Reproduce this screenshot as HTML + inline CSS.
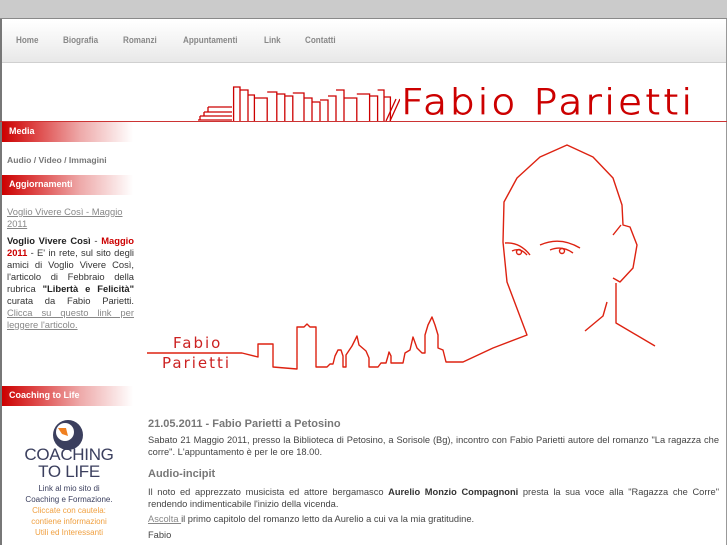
<!DOCTYPE html>
<html><head><meta charset="utf-8"><style>
*{margin:0;padding:0;box-sizing:border-box}
body{width:727px;height:545px;overflow:hidden;background:#fff;font-family:"Liberation Sans",sans-serif;position:relative}
.top{position:absolute;left:0;top:0;width:727px;height:19px;background:#cbcbcb;border-bottom:1px solid #8a8a8a}
.frame{position:absolute;left:0;top:19px;width:727px;height:526px;border-left:2px solid #777;border-right:1px solid #999}
.nav{position:absolute;left:2px;top:20px;width:724px;height:43px;background:linear-gradient(#fff 0,#fbfbfb 8px,#f2f2f2 25px,#e8e8e8 42px);border-bottom:1px solid #d0d0d0}
.nav span{position:absolute;top:15px;font-size:9px;font-weight:bold;color:#888;transform:scaleX(.9);transform-origin:left}
.redline{position:absolute;left:0;top:121px;width:727px;height:1px;background:#c33}
.logo{position:absolute;left:401px;top:83px;font-size:35px;color:#c00;letter-spacing:2.4px;font-family:"DejaVu Sans",sans-serif;font-weight:200;transform:scaleX(1.13);transform-origin:left;white-space:nowrap;-webkit-text-stroke:0.9px #c00}
.bar{position:absolute;left:2px;width:131px;height:20px;background:linear-gradient(90deg,#c00 0,#d44 25%,#eaa 60%,#fff 100%);color:#fff;font-size:9px;font-weight:bold;padding:4px 0 0 7px}
.side{position:absolute;left:7px;width:127px;font-size:9.4px;color:#333;line-height:12px;text-align:justify}
.main{position:absolute;left:148px;width:571px;font-size:9.3px;color:#444;line-height:12px;text-align:justify}
h3{font-size:11px;color:#777;font-weight:bold}
a{color:#888;text-decoration:underline}
</style></head><body>
<div class="top"></div>
<div class="frame"></div>
<div class="nav">
<span style="left:14px">Home</span><span style="left:61px">Biografia</span><span style="left:121px">Romanzi</span><span style="left:181px">Appuntamenti</span><span style="left:262px">Link</span><span style="left:303px">Contatti</span>
</div>
<svg style="position:absolute;left:0;top:80px" width="400" height="45" fill="none" stroke="#c00" stroke-width="1.3">
<path d="M198 40 H232 M200 36h32M204 32h28M208 27h24M200 36v4M204 32v4M208 27v5"/>
<g transform="translate(232 0) scale(1.6 1) translate(-232 0)">
<path vector-effect="non-scaling-stroke" d="M233 41V7h4v34M237 10h5v31M242 15h4v26M246 18h8v23M254 12h6v29M260 14h5v27M265 16h5v25M270 13h7v28M277 18h5v23M282 22h5v19M287 20h5v21M292 16h5v25M297 10h5v31M302 18h8v23M310 14h8v27M318 16h5v25M323 10h4v31M327 17h4v24"/>
</g>
<path d="M386 41l10-22M390 41l10-22"/>
</svg>
<div class="redline"></div>
<div class="logo">Fabio Parietti</div>

<svg style="position:absolute;left:140px;top:135px" width="587" height="245" viewBox="140 135 587 245" fill="none" stroke="#d21" stroke-width="1.4" stroke-linejoin="round">
<path d="M147 353H242L258 357V344H273V367L297 369V327H304L307 324L310 327H316V367H327L330 364H333L335 356L338 350H341L343 356V367H346V355L352 346L357 336L359 345L366 351L369 358V367H378L381 363H386L388 356L389 352L391 356V363H403L405 353L410 350L413 337L417 348L422 353H425V335L428 325L432 317L435 325L438 335V348L443 350L446 362H463L493 348L527 335L507 282L503 242L504 202L517 178L540 157L567 145L593 157L613 178L622 205L623 225L630 227L637 245L633 268L620 282L613 278"/>
<path d="M621 225L613 235M616 283V323L655 346M607 302L603 316L585 331"/>
<path d="M505 243Q520 242 530 255M540 245Q560 236 580 248M512 251Q520 247 527 255M550 250Q562 245 573 253"/>
<circle cx="519" cy="252" r="2.5"/><circle cx="562" cy="251" r="2.5"/>
<text x="173" y="348" font-family="DejaVu Sans,sans-serif" font-size="15" fill="#c22" stroke="none" letter-spacing="2">Fabio</text>
<text x="162" y="368" font-family="DejaVu Sans,sans-serif" font-size="15" fill="#c22" stroke="none" letter-spacing="2">Parietti</text>
</svg>

<div class="bar" style="top:122px">Media</div>
<div class="side" style="top:154px;font-weight:bold;color:#777;font-size:8.6px">Audio / Video / Immagini</div>
<div class="bar" style="top:175px">Aggiornamenti</div>
<div class="side" style="top:206px;color:#888;text-align:left"><a>Voglio Vivere Così - Maggio 2011</a></div>
<div class="side" style="top:235px"><b style="color:#222">Voglio Vivere Così</b> - <b style="color:#c00">Maggio 2011</b> - E' in rete, sul sito degli amici di Voglio Vivere Così, l'articolo di Febbraio della rubrica <b style="color:#222">"Libertà e Felicità"</b> curata da Fabio Parietti. <a>Clicca su questo link per leggere l'articolo.</a></div>
<div class="bar" style="top:386px">Coaching to Life</div>
<svg style="position:absolute;left:50px;top:418px" width="36" height="34"><circle cx="18" cy="17" r="15" fill="#3b3f5e"/><circle cx="15" cy="14" r="9" fill="#fff"/><path d="M8 10h8l2 8-6-2z" fill="#f08020"/></svg>
<div style="position:absolute;left:2px;top:446px;width:134px;text-align:center;color:#3b3f5e;font-size:17px;line-height:17px;letter-spacing:-.3px">COACHING<br>TO LIFE</div>
<div style="position:absolute;left:2px;top:483px;width:134px;text-align:center;font-size:8px;line-height:11px;color:#3b3f5e">Link al mio sito di<br>Coaching e Formazione.<br><span style="color:#f0a040">Cliccate con cautela:<br>contiene informazioni<br>Utili ed Interessanti</span></div>

<div class="main" style="top:418px"><h3>21.05.2011 - Fabio Parietti a Petosino</h3></div>
<div class="main" style="top:434px">Sabato 21 Maggio 2011, presso la Biblioteca di Petosino, a Sorisole (Bg), incontro con Fabio Parietti autore del romanzo "La ragazza che corre". L'appuntamento è per le ore 18.00.</div>
<div class="main" style="top:468px"><h3>Audio-incipit</h3></div>
<div class="main" style="top:486px">Il noto ed apprezzato musicista ed attore bergamasco <b style="color:#333">Aurelio Monzio Compagnoni</b> presta la sua voce alla "Ragazza che Corre" rendendo indimenticabile l'inizio della vicenda.</div>
<div class="main" style="top:513px"><a>Ascolta </a>il primo capitolo del romanzo letto da Aurelio a cui va la mia gratitudine.</div>
<div class="main" style="top:529px">Fabio</div>
</body></html>
